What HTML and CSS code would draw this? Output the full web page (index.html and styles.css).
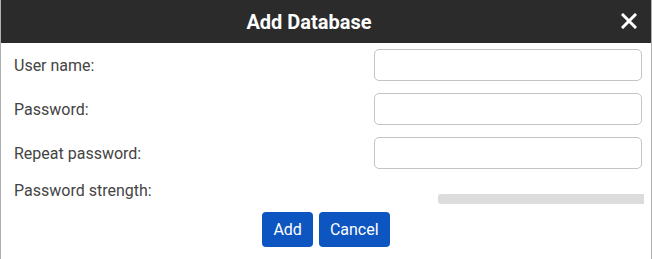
FILE: index.html
```html
<!DOCTYPE html>
<html>
<head>
<meta name="viewport" content="width=device-width, initial-scale=1">
<link rel="stylesheet" href="styles.css">
</head>
<body>

<div class="dialog">
  <div class="dialog-header">
    <span class="title">Add Database</span>
    <button type="button" class="close" aria-label="Close">
      <svg width="16" height="16" viewBox="0 0 16 16">
        <path d="M2 2 L14 14 M14 2 L2 14" stroke="#fff" stroke-width="3" stroke-linecap="square"/>
      </svg>
    </button>
  </div>

  <form class="dialog-body">
    <div class="row">
      <label for="user">User name:</label>
      <input type="text" id="user" name="user">
    </div>
    <div class="row">
      <label for="psw">Password:</label>
      <input type="password" id="psw" name="psw">
    </div>
    <div class="row">
      <label for="psw2">Repeat password:</label>
      <input type="password" id="psw2" name="psw2">
    </div>
    <div class="row strength">
      <label>Password strength:</label>
      <div class="meter"><div class="meter-fill" style="width:0%"></div></div>
    </div>
    <div class="buttons">
      <button type="submit" class="btn">Add</button>
      <button type="button" class="btn">Cancel</button>
    </div>
  </form>
</div>

</body>
</html>
```

FILE: styles.css
```css
body {
    margin: 0;
    background: #fff;
    font-family: Roboto, "Liberation Sans", Arial, sans-serif;
}

.dialog {
    width: 652px;
    height: 259px;
    border-left: 1px solid #b0b0b0;
    border-right: 1px solid #b0b0b0;
    box-sizing: border-box;
    background: #fff;
}

.dialog-header {
    height: 43px;
    background: #2b2b2b;
    display: flex;
    align-items: center;
    justify-content: center;
    padding-right: 34px;
    position: relative;
}

.title {
    color: #fff;
    font-weight: bold;
    font-size: 20px;
}

.close {
    position: absolute;
    right: 14px;
    top: 13px;
    background: none;
    border: none;
    padding: 0;
    width: 16px;
    height: 16px;
    cursor: pointer;
}

.dialog-body {
    padding: 0 9px 0 13px;
}

.row {
    display: flex;
    justify-content: space-between;
    align-items: center;
    height: 44px;
}

.row label {
    font-size: 16px;
    color: #444;
}

.row input {
    width: 268px;
    height: 32px;
    box-sizing: border-box;
    border: 1px solid #c4c4c4;
    border-radius: 5px;
    padding: 4px 8px;
    font-size: 15px;
}

.row.strength {
    height: 37px;
    align-items: flex-start;
    margin-right: -2px;
}

.row.strength label {
    margin-top: 6px;
}

.meter {
    width: 206px;
    height: 10px;
    margin-top: 19px;
    background: #dcdcdc;
    border-radius: 3px 0 0 3px;
}

.meter-fill {
    height: 100%;
    background: #2a9d3a;
}

.buttons {
    display: flex;
    justify-content: center;
    gap: 6px;
    padding-right: 4px;
}

.btn {
    background: #0d55c1;
    color: #fff;
    border: none;
    border-radius: 4px;
    height: 35px;
    padding: 0 11px;
    font-family: Roboto, "Liberation Sans", Arial, sans-serif;
    font-size: 16px;
    cursor: pointer;
}
```
